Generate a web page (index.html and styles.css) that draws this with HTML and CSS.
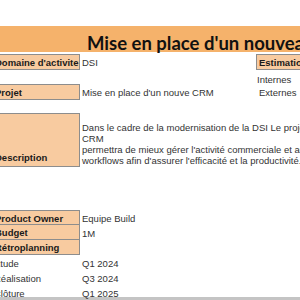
FILE: index.html
```html
<!DOCTYPE html>
<html lang="fr">
<head>
<meta charset="utf-8">
<link rel="stylesheet" href="styles.css">
</head>
<body>
<div class="sheet">
  <div class="top-gap"></div>
  <div class="title">Mise en place d'un nouveau CRM</div>
  <div class="row r16 first">
    <div class="c1 label">Domaine d'activite</div>
    <div class="c2 val">DSI</div>
    <div class="c3 label est">Estimation</div>
  </div>
  <div class="row r14">
    <div class="c1"></div>
    <div class="c2"></div>
    <div class="c3 val low">Internes</div>
  </div>
  <div class="row r16">
    <div class="c1 label">Projet</div>
    <div class="c2 val">Mise en place d'un nouve CRM</div>
    <div class="c3 val">Externes</div>
  </div>
  <div class="desc-row">
    <div class="c1 label desc-label">Description</div>
    <div class="desc-text">Dans le cadre de la modernisation de la DSI Le projet CRM<br>CRM<br>permettra de mieux gérer l'activité commerciale et automatiser les<br>workflows afin d'assurer l'efficacité et la productivité.</div>
  </div>
  <div class="stack">
    <div class="row r15">
      <div class="c1 label">Product Owner</div>
      <div class="c2 val">Equipe Build</div>
    </div>
    <div class="row r15">
      <div class="c1 label nt">Budget</div>
      <div class="c2 val">1M</div>
    </div>
    <div class="row r15">
      <div class="c1 label nt">Rétroplanning</div>
      <div class="c2 val"></div>
    </div>
    <div class="row r15">
      <div class="c1 plain">Etude</div>
      <div class="c2 val">Q1 2024</div>
    </div>
    <div class="row r15">
      <div class="c1 plain">Réalisation</div>
      <div class="c2 val">Q3 2024</div>
    </div>
    <div class="row r12">
      <div class="c1 plain">Clôture</div>
      <div class="c2 val">Q1 2025</div>
    </div>
  </div>
  <div class="bottom-bar"></div>
</div>
</body>
</html>
```
FILE: styles.css
```css
html, body {
  margin: 0;
  padding: 0;
  background: #ffffff;
  overflow: hidden;
}
.sheet {
  margin-left: -8px;
  width: 360px;
  font-family: "Liberation Sans", Arial, sans-serif;
  font-size: 9.5px;
  color: #333333;
}
.top-gap {
  height: 26px;
}
.title {
  height: 26px;
  background: #f5b26b;
  padding-left: 95px;
  font-family: "Lato", "Liberation Sans", sans-serif;
  font-weight: 700;
  font-size: 18.5px;
  line-height: 34px;
  color: #111111;
  white-space: nowrap;
  overflow: visible;
}
.row {
  display: flex;
  align-items: stretch;
}
.first {
  margin-top: 2px;
}
.r16 { height: 16px; }
.r14 { height: 14px; }
.r15 { height: 15px; }
.r12 { height: 12px; }
.c1 {
  width: 88px;
  box-sizing: border-box;
  flex: none;
}
.c2 {
  width: 174px;
  flex: none;
}
.c3 {
  flex: none;
}
.label {
  background: #f8cba0;
  border: 1px solid #8d8d8d;
  font-weight: 700;
  color: #1a1a1a;
  padding-left: 2px;
  padding-top: 1px;
  line-height: 14px;
  white-space: nowrap;
  overflow: hidden;
}
.nt {
  border-top: none;
}
.val {
  padding-left: 2px;
  line-height: 17px;
  white-space: nowrap;
}
.est {
  width: 60px;
  box-sizing: border-box;
}
.c3.val {
  padding-left: 3px;
}
.c3.low {
  line-height: 20px;
}
.plain {
  padding-left: 2px;
  line-height: 17px;
}
.desc-row {
  display: flex;
  margin-top: 13px;
  height: 54px;
}
.desc-label {
  display: flex;
  align-items: flex-end;
  line-height: 14px;
  padding-bottom: 1px;
}
.desc-text {
  padding-left: 2px;
  padding-top: 9px;
  line-height: 11px;
  white-space: nowrap;
}
.stack {
  margin-top: 43px;
}
.bottom-bar {
  height: 3px;
  background: #c4c4c4;
}
```
